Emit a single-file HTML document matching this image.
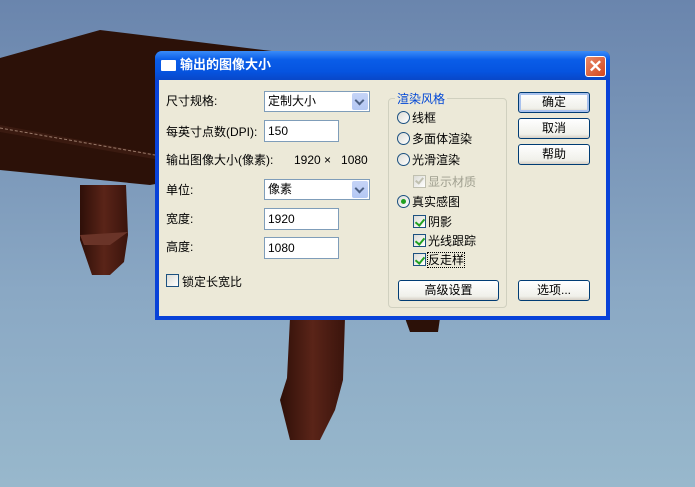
<!DOCTYPE html>
<html><head><meta charset="utf-8"><style>
*{margin:0;padding:0;box-sizing:border-box}
body{width:695px;height:487px;overflow:hidden;position:relative;background:linear-gradient(#6a85ad,#8aa8c4 60%,#98b8cc);font-family:"Liberation Sans","Noto Sans CJK SC","WenQuanYi Zen Hei",sans-serif;font-size:12px;color:#000}
.a{position:absolute}
.dlg{left:155px;top:51px;width:455px;height:269px;background:#0842d8;border-radius:7px 7px 0 0}
.title{left:0;top:0;width:455px;height:29px;border-radius:7px 7px 0 0;background:linear-gradient(#3a8cf8,#0a5de8 30%,#0654e0 70%,#0847c8)}
.body{left:4px;top:29px;width:447px;height:236px;background:#ece9d8}
.t{white-space:nowrap;line-height:14px}
.edit{background:#fff;border:1px solid #7f9db9;padding:2px 3px;line-height:16px}
.combo{background:#fff;border:1px solid #7f9db9;padding:2px 3px;line-height:15px}
.dd{position:absolute;right:1px;top:1px;width:16px;height:17px;background:linear-gradient(#c6d4f7,#b4c8f4);border-radius:2px}
.dd:after{content:"";position:absolute;left:4px;top:4px;width:5px;height:5px;border-right:2px solid #4d6185;border-bottom:2px solid #4d6185;transform:rotate(45deg)}
.btn{background:linear-gradient(#fff,#f0f0ea 80%,#d6d0c5);border:1px solid #003c74;border-radius:3px;text-align:center;line-height:19px}
.rad{width:13px;height:13px;border-radius:50%;border:1px solid #1c5180;background:linear-gradient(135deg,#dcdcd6,#fff)}
.chk{width:13px;height:13px;border:1px solid #1c5180;background:linear-gradient(135deg,#dcdcd6,#fff)}
.chk.on:after{content:"";position:absolute;left:3px;top:1px;width:4px;height:7px;border-right:2px solid #21a121;border-bottom:2px solid #21a121;transform:rotate(40deg)}
</style></head><body>
<svg class="a" style="left:0;top:0" width="695" height="487">
<defs><linearGradient id="lg" x1="0" x2="1"><stop offset="0" stop-color="#2e0f08"/><stop offset="0.5" stop-color="#5a2418"/><stop offset="1" stop-color="#3a140c"/></linearGradient></defs>
<polygon points="0,58 100,30 280,52 290,160 150,185 0,170" fill="#2c1108"/>
<polygon points="0,125 160,155 160,160 0,132" fill="#3a1a10"/>
<line x1="0" y1="128" x2="155" y2="155" stroke="#9a7a6a" stroke-dasharray="3,2" stroke-width="1"/>
<polygon points="80,185 126,185 128,235 124,262 110,275 92,275 80,240" fill="url(#lg)"/>
<polygon points="80,235 128,232 110,245 84,245" fill="#6a3428"/>
<polygon points="290,318 345,318 343,380 335,410 320,440 290,440 280,400 287,378" fill="url(#lg)"/>
<polygon points="405,318 440,318 438,332 410,332" fill="#2c1108"/>
</svg>
<div class="a dlg">
<div class="a title">
<div class="a" style="left:6px;top:9px;width:15px;height:11px;background:#fff;border-radius:1px"></div>
<div class="a t" style="left:25px;top:7px;color:#fff;font-weight:bold;font-size:13px">输出的图像大小</div>
<div class="a" style="left:430px;top:5px;width:21px;height:21px;border:1px solid #fff;border-radius:3px;background:linear-gradient(135deg,#e88a6a,#d3461e);color:#fff;text-align:center;font-size:17px;line-height:19px;font-weight:bold">✕</div>
</div>
<div class="a body">
<div class="a t" style="left:7px;top:14px">尺寸规格:</div>
<div class="a combo" style="left:105px;top:11px;width:106px;height:21px">定制大小<div class="dd"></div></div>
<div class="a t" style="left:7px;top:45px">每英寸点数(DPI):</div>
<div class="a edit" style="left:105px;top:40px;width:75px;height:22px">150</div>
<div class="a t" style="left:7px;top:73px">输出图像大小(像素):</div>
<div class="a t" style="left:135px;top:73px">1920 ×&nbsp;&nbsp; 1080</div>
<div class="a t" style="left:7px;top:103px">单位:</div>
<div class="a combo" style="left:105px;top:99px;width:106px;height:21px">像素<div class="dd"></div></div>
<div class="a t" style="left:7px;top:132px">宽度:</div>
<div class="a edit" style="left:105px;top:128px;width:75px;height:22px">1920</div>
<div class="a t" style="left:7px;top:160px">高度:</div>
<div class="a edit" style="left:105px;top:157px;width:75px;height:22px">1080</div>
<div class="a chk" style="left:7px;top:194px"></div>
<div class="a t" style="left:23px;top:195px">锁定长宽比</div>
<div class="a" style="left:229px;top:18px;width:119px;height:210px;border:1px solid #d0d0bf;border-radius:4px"></div>
<div class="a t" style="left:236px;top:12px;color:#0046d5;background:#ece9d8;padding:0 2px">渲染风格</div>
<div class="a rad" style="left:238px;top:31px"></div><div class="a t" style="left:253px;top:31px">线框</div>
<div class="a rad" style="left:238px;top:52px"></div><div class="a t" style="left:253px;top:52px">多面体渲染</div>
<div class="a rad" style="left:238px;top:73px"></div><div class="a t" style="left:253px;top:73px">光滑渲染</div>
<div class="a chk" style="left:254px;top:95px;border-color:#c0c0b0"></div><div class="a t" style="left:269px;top:95px;color:#a0a090">显示材质</div>
<div class="a" style="left:258px;top:96px;width:5px;height:8px;border-right:2px solid #c0c0b0;border-bottom:2px solid #c0c0b0;transform:rotate(40deg)"></div>
<div class="a rad" style="left:238px;top:115px"></div><div class="a" style="left:242px;top:119px;width:5px;height:5px;border-radius:50%;background:#21a121"></div><div class="a t" style="left:253px;top:115px">真实感图</div>
<div class="a chk on" style="left:254px;top:135px"></div><div class="a t" style="left:269px;top:135px">阴影</div>
<div class="a chk on" style="left:254px;top:154px"></div><div class="a t" style="left:269px;top:154px">光线跟踪</div>
<div class="a chk on" style="left:254px;top:173px"></div><div class="a t" style="left:269px;top:173px;outline:1px dotted #000">反走样</div>
<div class="a btn" style="left:239px;top:200px;width:101px;height:21px">高级设置</div>
<div class="a btn" style="left:359px;top:12px;width:72px;height:21px;border-color:#003c74;box-shadow:inset 0 0 0 2px #a9c2ee">确定</div>
<div class="a btn" style="left:359px;top:38px;width:72px;height:21px">取消</div>
<div class="a btn" style="left:359px;top:64px;width:72px;height:21px">帮助</div>
<div class="a btn" style="left:359px;top:200px;width:72px;height:21px">选项...</div>
</div>
</div>
</body></html>
